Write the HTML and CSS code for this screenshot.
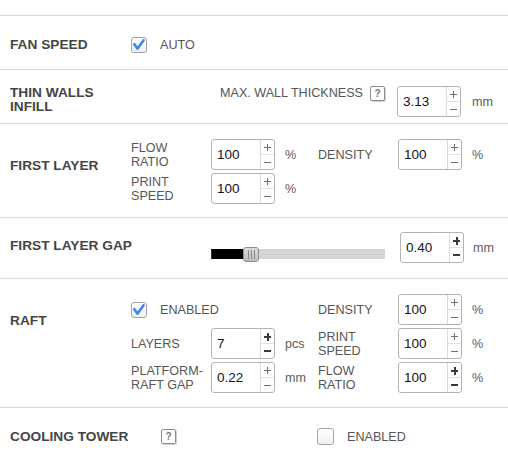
FILE: index.html
```html
<!DOCTYPE html>
<html>
<head>
<meta charset="utf-8">
<link rel="stylesheet" href="styles.css">
</head>
<body>
<div class="panel">
  <div class="sec s1">
    <div class="lbl c1">FAN SPEED</div>
    <div class="cbline c2 span3">
      <span class="cb on"><svg width="14" height="14" viewBox="0 0 14 14"><path d="M2.3 6.2 L5.6 10.6 L11.6 2.2" fill="none" stroke="#3d86ee" stroke-width="2.6" stroke-linecap="round" stroke-linejoin="round"/></svg></span>
      <span class="txt">AUTO</span>
    </div>
  </div>

  <div class="sec s2">
    <div class="lbl c1 two top">THIN WALLS<br>INFILL</div>
    <div class="maxwall c2 span4">
      <span class="txt">MAX. WALL THICKNESS</span>
      <span class="help">?</span>
    </div>
    <div class="num c6 nudge-l"><span class="val">3.13</span><span class="spin"><span class="up"></span><span class="dn"></span></span></div>
    <div class="unit c7">mm</div>
  </div>

  <div class="sec s3">
    <div class="lbl c1 rspan2 toplbl">FIRST LAYER</div>
    <div class="txt two c2 r1">FLOW<br>RATIO</div>
    <div class="num c3 r1"><span class="val">100</span><span class="spin"><span class="up"></span><span class="dn"></span></span></div>
    <div class="unit c4 r1">%</div>
    <div class="txt c5 r1">DENSITY</div>
    <div class="num c6 r1"><span class="val">100</span><span class="spin"><span class="up"></span><span class="dn"></span></span></div>
    <div class="unit c7 r1">%</div>
    <div class="txt two c2 r2">PRINT<br>SPEED</div>
    <div class="num c3 r2"><span class="val">100</span><span class="spin"><span class="up"></span><span class="dn"></span></span></div>
    <div class="unit c4 r2">%</div>
  </div>

  <div class="sec s4">
    <div class="lbl c1 gaplbl">FIRST LAYER GAP</div>
    <div class="slider c3 span3">
      <div class="track"><div class="fill"></div></div>
      <div class="thumb"><span class="grip"></span></div>
    </div>
    <div class="num dark c6 nudge-r"><span class="val">0.40</span><span class="spin"><span class="up"></span><span class="dn"></span></span></div>
    <div class="unit c7 nudge-u">mm</div>
  </div>

  <div class="sec s5">
    <div class="lbl c1 rspan3 toplbl">RAFT</div>
    <div class="cbline c2 span3 r1">
      <span class="cb on"><svg width="14" height="14" viewBox="0 0 14 14"><path d="M2.3 6.2 L5.6 10.6 L11.6 2.2" fill="none" stroke="#3d86ee" stroke-width="2.6" stroke-linecap="round" stroke-linejoin="round"/></svg></span>
      <span class="txt">ENABLED</span>
    </div>
    <div class="txt c5 r1">DENSITY</div>
    <div class="num c6 r1"><span class="val">100</span><span class="spin"><span class="up"></span><span class="dn"></span></span></div>
    <div class="unit c7 r1">%</div>

    <div class="txt c2 r2">LAYERS</div>
    <div class="num dark c3 r2"><span class="val">7</span><span class="spin"><span class="up"></span><span class="dn"></span></span></div>
    <div class="unit c4 r2">pcs</div>
    <div class="txt two c5 r2">PRINT<br>SPEED</div>
    <div class="num c6 r2"><span class="val">100</span><span class="spin"><span class="up"></span><span class="dn"></span></span></div>
    <div class="unit c7 r2">%</div>

    <div class="txt two c2 r3">PLATFORM-<br>RAFT GAP</div>
    <div class="num c3 r3"><span class="val">0.22</span><span class="spin"><span class="up"></span><span class="dn"></span></span></div>
    <div class="unit c4 r3">mm</div>
    <div class="txt two c5 r3">FLOW<br>RATIO</div>
    <div class="num dark c6 r3"><span class="val">100</span><span class="spin"><span class="up"></span><span class="dn"></span></span></div>
    <div class="unit c7 r3">%</div>
  </div>

  <div class="sec s6">
    <div class="lbl c1">COOLING TOWER</div>
    <div class="c2 helpcell"><span class="help">?</span></div>
    <div class="cbline c5 span3 nudge-l">
      <span class="cb"></span>
      <span class="txt">ENABLED</span>
    </div>
  </div>
</div>
</body>
</html>
```

FILE: styles.css
```css
html, body {
  margin: 0;
  padding: 0;
  background: #ffffff;
}
body {
  font-family: "Liberation Sans", Arial, sans-serif;
  width: 508px;
  height: 460px;
  overflow: hidden;
}
.panel {
  padding-top: 15px;
}
.sec {
  display: grid;
  grid-template-columns: 121px 80px 74px 33px 80px 74px 1fr;
  grid-auto-rows: 31px;
  row-gap: 3px;
  align-items: center;
  padding-left: 10px;
  border-top: 1px solid #d6d6d6;
}
.s1 { padding-top: 13px; padding-bottom: 9px; }
.s2 { padding-top: 16px; padding-bottom: 6px; }
.s3 { padding-top: 15px; padding-bottom: 13px; }
.s4 { padding-top: 14px; padding-bottom: 15px; }
.s5 { padding-top: 15px; padding-bottom: 14px; }
.s6 { padding-top: 13px; padding-bottom: 20px; }

.c1 { grid-column: 1; }
.c2 { grid-column: 2; }
.c3 { grid-column: 3; }
.c4 { grid-column: 4; }
.c5 { grid-column: 5; }
.c6 { grid-column: 6; }
.c7 { grid-column: 7; }
.span3 { grid-column-end: span 3; }
.span4 { grid-column-end: span 4; }
.r1 { grid-row: 1; }
.r2 { grid-row: 2; }
.r3 { grid-row: 3; }
.rspan2 { grid-row: 1 / span 2; }
.rspan3 { grid-row: 1 / span 3; }

.lbl {
  font-weight: bold;
  font-size: 13.7px;
  line-height: 16px;
  color: #454545;
  white-space: nowrap;
}
.lbl.two { line-height: 14px; }
.top { align-self: start; }
.toplbl { align-self: start; margin-top: 19px; }
.gaplbl { margin-top: -3px; }

.txt {
  font-size: 12.6px;
  line-height: 14px;
  color: #565656;
  white-space: nowrap;
}
.unit {
  font-size: 12.6px;
  color: #5c5c5c;
  white-space: nowrap;
}

.cbline {
  display: flex;
  align-items: center;
  gap: 13px;
}
.cb {
  width: 16px;
  height: 16px;
  box-sizing: border-box;
  border: 1px solid #a3a3a3;
  border-radius: 3px;
  background: linear-gradient(#ffffff, #f1f1f1);
  display: flex;
  align-items: center;
  justify-content: center;
}
.s6 .cb { width: 17px; height: 17px; }

.maxwall {
  align-self: start;
  display: flex;
  justify-content: flex-end;
  align-items: flex-start;
  gap: 7px;
  padding-right: 13px;
}
.help {
  width: 15px;
  height: 15px;
  box-sizing: border-box;
  border: 1px solid #8c8c8c;
  border-radius: 2px;
  box-shadow: 1px 1px 0 #d0d0d0;
  font-size: 10px;
  font-weight: bold;
  color: #777;
  display: flex;
  align-items: center;
  justify-content: center;
  line-height: 1;
}
.helpcell { padding-left: 30px; display: flex; }

.num {
  width: 64px;
  height: 31px;
  box-sizing: border-box;
  border: 1px solid #b3b3b3;
  border-radius: 3px;
  display: flex;
  background: #fff;
}
.s2 .num { align-self: start; }
.nudge-l { margin-left: -1px; }
.nudge-r { margin-left: 2px; }
.nudge-u { margin-left: 1px; }
.val {
  flex: 1;
  display: flex;
  align-items: center;
  padding-left: 5px;
  font-size: 13.5px;
  color: #141420;
}
.spin {
  width: 13px;
  border-left: 1px solid #dcdcdc;
  display: flex;
  flex-direction: column;
}
.spin span {
  flex: 1;
  position: relative;
}
.spin .up { border-bottom: 1px solid #e2e2e2; }
.spin .up::before,
.spin .up::after,
.spin .dn::before {
  content: "";
  position: absolute;
  background: #707070;
}
.spin .up::before {
  left: 3px; width: 7px; top: 7px; height: 1px;
}
.spin .up::after {
  left: 6px; width: 1px; top: 4px; height: 7px;
}
.spin .dn::before {
  left: 3px; width: 7px; top: 7px; height: 1px;
}
.num.dark .spin .up::before,
.num.dark .spin .dn::before { background: #3a3a3a; height: 2px; }
.num.dark .spin .up::after { background: #3a3a3a; width: 2px; left: 5.5px; top: 4px; height: 8px; }
.num.dark .spin .up::before { top: 7px; }
.num.dark .spin .dn::before { top: 6px; }

.slider {
  position: relative;
  width: 174px;
  height: 15px;
  align-self: start;
  margin-top: 15px;
}
.track {
  margin-top: 2px;
  height: 10px;
  background: #d4d4d4;
  display: flex;
}
.fill {
  width: 32px;
  background: #000;
  box-shadow: inset 1px 0 0 #333;
}
.thumb {
  position: absolute;
  left: 32px;
  top: 0;
  width: 16px;
  height: 15px;
  box-sizing: border-box;
  border: 1px solid #8e8e8e;
  border-radius: 3px;
  background: linear-gradient(#dcdcdc, #bcbcbc);
  display: flex;
  align-items: center;
  justify-content: center;
}
.grip {
  width: 7px;
  height: 9px;
  background: repeating-linear-gradient(90deg, #8a8a8a 0 1px, transparent 1px 3px);
}
```
